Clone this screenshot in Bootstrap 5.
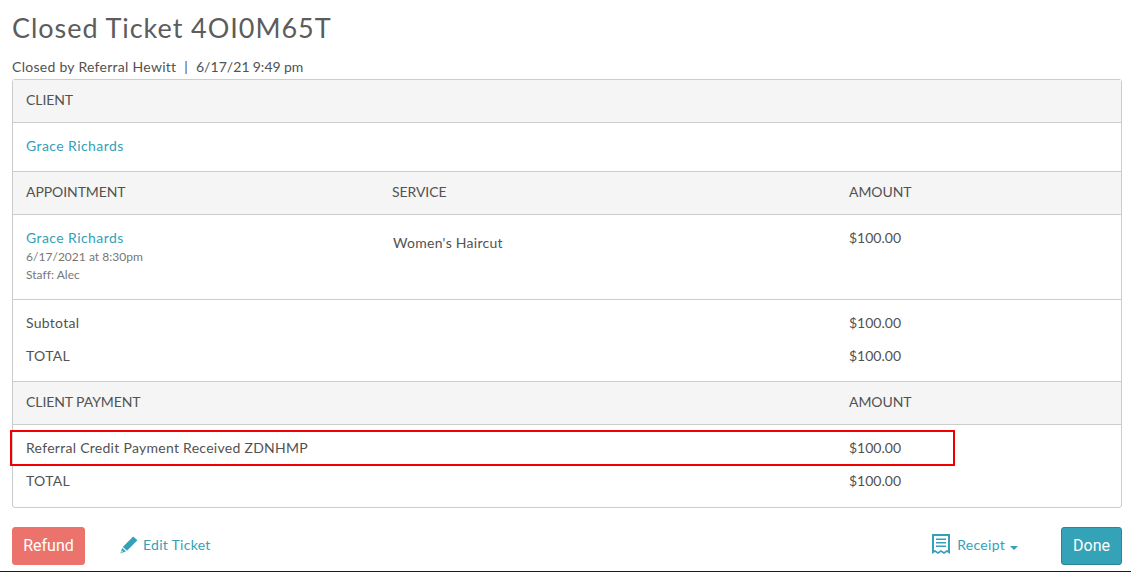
<!DOCTYPE html>
<html lang="en">
<head>
  <meta charset="UTF-8">
  <title>Closed Ticket</title>
  <link href="https://cdn.jsdelivr.net/npm/bootstrap@5.3.2/dist/css/bootstrap.min.css" rel="stylesheet">
  <style>
    html, body { height: 572px; overflow: hidden; }
    body {
      font-family: "Lato", "Open Sans", sans-serif;
      font-size: 14px;
      letter-spacing: .28px;
      color: #525252;
      background: #fff;
      border-bottom: 1px solid #1c1c1c;
    }
    a { color: #35a0b8; text-decoration: none; }
    .page-wrap { position: relative; padding: 0 9px 0 12px; }
    .ticket-title { font-size: 27px; font-weight: 400; letter-spacing: .95px; line-height: 32px; padding-top: 12px; margin: 0 0 14px; color: #5c5c5c; }
    .closed-by { line-height: 17px; margin-bottom: 4px; }
    .closed-by .sep { padding: 0 4px; }
    .closed-date { letter-spacing: .05px; word-spacing: -.5px; }
    .ticket-panel { border: 1px solid #ccc; border-radius: 3px; }
    .ticket-row { display: grid; grid-template-columns: 366px 457px 1fr; padding: 0 13px; }
    .ticket-head { height: 43px; align-items: center; background: #f5f5f5; border-bottom: 1px solid #ccc; padding-bottom: 3px; letter-spacing: -.08px; }
    .ticket-head.mid { border-top: 1px solid #ccc; height: 44px; }
    .client-row { height: 48px; align-items: center; padding-bottom: 3px; }
    .client-link { letter-spacing: .42px; }
    .appt-row { height: 85px; padding-top: 14px; border-bottom: 1px solid #ccc; }
    .appt-meta { font-size: 12px; color: #777; line-height: 18px; letter-spacing: .03px; }
    .appt-first { padding-top: 1px; }
    .appt-name { line-height: 18px; }
    .service-cell { padding: 5px 0 0 1px; line-height: 18px; }
    .amount-cell { letter-spacing: 0; }
    .sum-row { height: 33px; align-items: center; padding-bottom: 2px; }
    .sum-first { margin-top: 7px; }
    .sum-last { margin-bottom: 8px; }
    .pay-first { margin-top: 7px; }
    .pay-last { margin-bottom: 9px; }
    .span-two { grid-column: span 2; }
    .red-mark { position: absolute; left: 10px; top: 430px; width: 945px; height: 36px; border: 2px solid #f00000; pointer-events: none; }
    .foot-bar { margin-top: 19px; height: 38px; }
    .btn-refund, .btn-done { color: #fff; font-family: "Roboto", sans-serif; font-size: 16px; letter-spacing: 0; padding: 0; height: 38px; border-radius: 3px; }
    .btn-refund { background: #ec736b; border: 1px solid #ec736b; width: 73px; }
    .btn-done { background: #34a2b7; border: 1px solid #2a8799; width: 61px; }
    .edit-link { margin-left: 35px; padding-bottom: 3px; gap: 5px; }
    .receipt-link { margin-right: 43px; padding-bottom: 3px; gap: 7px; }
    .caret-down { display: inline-block; width: 0; height: 0; border-left: 4px solid transparent; border-right: 4px solid transparent; border-top: 4px solid #35a0b8; margin-left: 5px; vertical-align: 0; }
  </style>
</head>
<body>
<div class="page-wrap">
  <h1 class="ticket-title">Closed Ticket 4OI0M65T</h1>
  <div class="closed-by">Closed by Referral Hewitt <span class="sep">|</span> <span class="closed-date">6/17/21 9:49 pm</span></div>

  <div class="ticket-panel">
    <div class="ticket-row ticket-head"><div>CLIENT</div></div>
    <div class="ticket-row client-row"><div><a href="#" class="client-link">Grace Richards</a></div></div>

    <div class="ticket-row ticket-head mid">
      <div>APPOINTMENT</div><div>SERVICE</div><div>AMOUNT</div>
    </div>
    <div class="ticket-row appt-row">
      <div>
        <div class="appt-name"><a href="#" class="client-link">Grace Richards</a></div>
        <div class="appt-meta appt-first">6/17/2021 at 8:30pm</div>
        <div class="appt-meta">Staff: Alec</div>
      </div>
      <div class="service-cell">Women's Haircut</div>
      <div class="appt-name amount-cell">$100.00</div>
    </div>

    <div class="ticket-row sum-row sum-first"><div class="span-two">Subtotal</div><div class="amount-cell">$100.00</div></div>
    <div class="ticket-row sum-row sum-last"><div class="span-two">TOTAL</div><div class="amount-cell">$100.00</div></div>

    <div class="ticket-row ticket-head mid">
      <div class="span-two">CLIENT PAYMENT</div><div>AMOUNT</div>
    </div>
    <div class="ticket-row sum-row pay-first"><div class="span-two">Referral Credit Payment Received ZDNHMP</div><div class="amount-cell">$100.00</div></div>
    <div class="ticket-row sum-row pay-last"><div class="span-two">TOTAL</div><div class="amount-cell">$100.00</div></div>
  </div>

  <div class="d-flex align-items-center foot-bar">
    <button type="button" class="btn btn-refund">Refund</button>
    <a href="#" class="edit-link d-flex align-items-center">
      <svg width="18" height="18" viewBox="0 0 18 18"><path fill="#35a0b8" d="M13.2.6 17.4 4.2 7 14.8 2.800 11zM2.200 12 5.900 15.500.4 17.600z"/><path fill="#fff" d="M1.900 14.800 3.200 16 1.300 16.700z"/></svg>
      <span>Edit Ticket</span>
    </a>
    <a href="#" class="receipt-link ms-auto d-flex align-items-center">
      <svg width="18" height="21" viewBox="0 0 18 21"><path fill="#35a0b8" d="M0 0h18v20l-3-2-3 2-3-2-3 2-3-2-3 2z"/><path fill="#fff" d="M2 2h14v14.600l-1-.6-3 2-3-2-3 2-3-2-1 .6z"/><path fill="#35a0b8" d="M4 4.500h10V6H4zM4 8h10v1.500H4zM4 11.500h10V13H4z"/></svg>
      <span>Receipt<span class="caret-down"></span></span>
    </a>
    <button type="button" class="btn btn-done">Done</button>
  </div>

  <div class="red-mark"></div>
</div>
<script src="https://cdn.jsdelivr.net/npm/bootstrap@5.3.2/dist/js/bootstrap.bundle.min.js"></script>
</body>
</html>
